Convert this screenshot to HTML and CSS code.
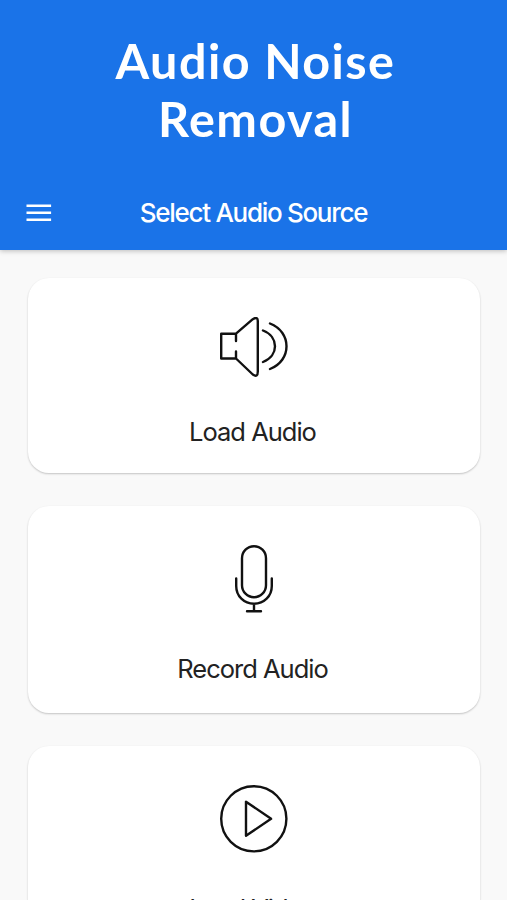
FILE: index.html
```html
<!DOCTYPE html>
<html lang="en">
<head>
<meta charset="utf-8">
<title>Audio Noise Removal</title>
<link rel="stylesheet" href="styles.css">
</head>
<body>
<header class="header">
  <h1 class="title">Audio Noise<br>Removal</h1>
  <div class="toolbar">
    <svg class="menu" viewBox="0 0 26 18"><path d="M.5 1.800h24.600M.5 8.800h24.600M.5 15.700h24.600"/></svg>
    <h2 class="heading">Select Audio Source</h2>
  </div>
</header>
<main class="sources">
  <section class="card card-load">
    <svg class="icon icon-speaker" viewBox="0 0 70 60"><path d="M17 24V16.700H2.200V41.500H17V34.500M17 16.700 33.800 2.200Q38.800-1 38.800 4V54.500Q38.800 61 33.800 57.500L17 41.500M44 13.500C60 19.500 60 39 44 45M51 6.500C73 15 73 43.500 51 52"/></svg>
    <span class="label">Load Audio</span>
  </section>
  <section class="card">
    <svg class="icon icon-mic" viewBox="0 0 40 68"><rect x="8" y="1.200" width="24" height="51" rx="12"/><path d="M2.200 33.500V41C2.200 51.200 10 58.700 20 58.700S37.800 51.200 37.800 41V33.500M20 58.700V66M13 66.300H27"/></svg>
    <span class="label">Record Audio</span>
  </section>
  <section class="card card-video">
    <svg class="icon icon-play" viewBox="0 0 70 68"><circle cx="34.800" cy="33.800" r="32.600"/><path d="M27 16.700V50.800L52.100 33.800Z"/></svg>
    <span class="label">Load Video</span>
  </section>
</main>
</body>
</html>
```
FILE: styles.css
```css
* { box-sizing: border-box; }
body {
  margin: 0;
  height: 900px;
  overflow: hidden;
  background: #f9f9f9;
  font-family: Inter, "Liberation Sans", sans-serif;
}
.header {
  height: 250px;
  padding-top: 31px;
  background: #1a73e8;
  color: #fff;
  box-shadow: 0 1px 5px rgba(0, 0, 0, .25);
}
.title {
  margin: 0;
  padding-left: 4px;
  font: 700 48.5px/58px Lato, sans-serif;
  letter-spacing: 1.45px;
  text-align: center;
}
.toolbar {
  display: grid;
  grid-template-columns: 52px 1fr 52px;
  align-items: center;
  height: 40px;
  margin-top: 46px;
}
.menu {
  width: 26px;
  height: 18px;
  margin-left: 26px;
  stroke: #fff;
  stroke-width: 2.6;
}
.heading {
  margin: 0;
  font-size: 26px;
  font-weight: 500;
  line-height: 40px;
  letter-spacing: -1.3px;
  text-align: center;
  white-space: nowrap;
}
.sources { padding: 28px 27px 0 28px; }
.card {
  display: flex;
  flex-direction: column;
  align-items: center;
  height: 207px;
  margin-bottom: 33px;
  padding-top: 39px;
  border-radius: 21px;
  background: #fff;
  box-shadow: 0 1px 2px rgba(0, 0, 0, .22);
}
.card-load { height: 195px; }
.card-video { height: 154px; margin-bottom: 0; border-radius: 21px 21px 0 0; }
.icon {
  flex: none;
  height: 68px;
  margin-bottom: 40px;
  fill: none;
  stroke: #111;
  stroke-width: 2.4;
  stroke-linecap: round;
  stroke-linejoin: round;
}
.icon-speaker { width: 70px; height: 60px; }
.icon-mic { width: 40px; }
.icon-play { width: 70px; }
.label {
  padding-right: 3px;
  color: #222;
  font-size: 25.5px;
  line-height: 32px;
  letter-spacing: -1px;
  white-space: nowrap;
}
.card-load .label { margin-top: -1px; }
```
